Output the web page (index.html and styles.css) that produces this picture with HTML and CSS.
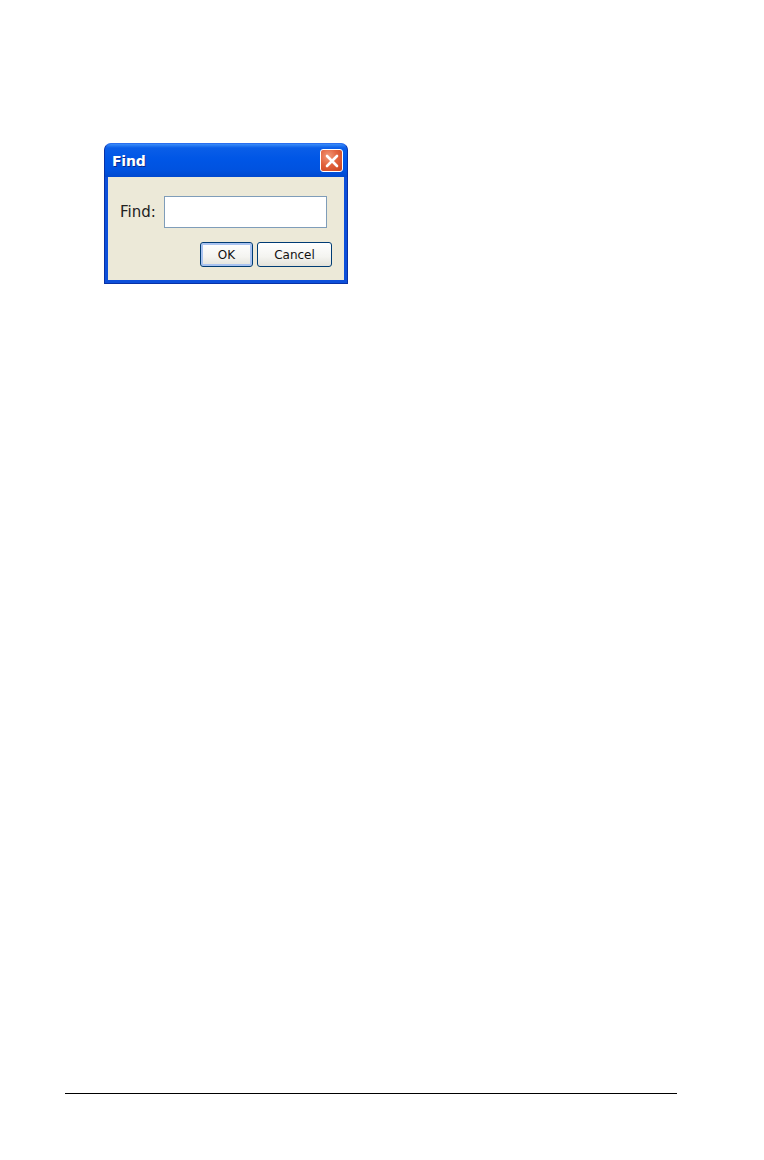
FILE: index.html
```html
<!DOCTYPE html>
<html>
<head>
<meta charset="utf-8">
<link rel="stylesheet" href="styles.css">
</head>
<body>
<div class="page">
  <div class="dialog">
    <div class="titlebar">
      <span class="title">Find</span>
      <div class="close">
        <svg width="14" height="14" viewBox="0 0 14 14"><path d="M2 2 L12 12 M12 2 L2 12" stroke="#fff" stroke-width="2.6" stroke-linecap="round"/></svg>
      </div>
    </div>
    <div class="body">
      <div class="row">
        <label class="label">Find:</label>
        <div class="input"></div>
      </div>
      <div class="buttons">
        <div class="btn ok">OK</div>
        <div class="btn cancel">Cancel</div>
      </div>
    </div>
  </div>
  <div class="rule"></div>
</div>
</body>
</html>
```
FILE: styles.css
```css
html, body {
  margin: 0;
  padding: 0;
  background: #fff;
}
.page {
  width: 764px;
  height: 1160px;
  padding-top: 143px;
  box-sizing: border-box;
  font-family: "DejaVu Sans", Tahoma, sans-serif;
}
.dialog {
  margin-left: 104px;
  width: 244px;
  height: 141px;
  box-sizing: border-box;
  background: #0d4fd9;
  border-radius: 7px 7px 0 0;
  padding: 0 3px 3px 3px;
  display: flex;
  flex-direction: column;
  border: 1px solid #0831a6;
  border-top-color: #2a6ff0;
}
.titlebar {
  height: 33px;
  margin: 0 -3px;
  padding: 0 4px 0 7px;
  border-radius: 6px 6px 0 0;
  background: linear-gradient(#3a8cf9 0%, #0a5ee8 12%, #0056e6 45%, #0052df 80%, #0049cf 100%);
  display: flex;
  align-items: center;
  justify-content: space-between;
}
.title {
  color: #fff;
  font-weight: bold;
  font-size: 14px;
  font-family: "DejaVu Sans", Tahoma, sans-serif;
  text-shadow: 1px 1px 0 #0a2a8a;
  letter-spacing: -0.2px;
}
.close {
  width: 23px;
  height: 23px;
  box-sizing: border-box;
  border: 1px solid #fff;
  border-radius: 3px;
  background: radial-gradient(circle at 35% 30%, #f29a7a 0%, #e2643f 45%, #c9411c 100%);
  display: flex;
  align-items: center;
  justify-content: center;
}
.body {
  flex: 1;
  background: #ece9d8;
  padding: 19px 12px 0 12px;
}
.row {
  display: flex;
  align-items: center;
}
.label {
  font-size: 15px;
  color: #222;
  width: 44px;
}
.input {
  width: 163px;
  height: 32px;
  box-sizing: border-box;
  background: #fff;
  border: 1px solid #7f9db9;
}
.buttons {
  display: flex;
  justify-content: flex-end;
  gap: 4px;
  margin-top: 14px;
}
.btn {
  height: 25px;
  box-sizing: border-box;
  border: 1px solid #003c74;
  border-radius: 3px;
  background: linear-gradient(#ffffff 0%, #f4f4f0 60%, #e3e2da 100%);
  font-size: 12px;
  color: #111;
  display: flex;
  align-items: center;
  justify-content: center;
}
.ok {
  width: 53px;
  box-shadow: inset 0 0 0 2px #a9c3f0;
}
.cancel {
  width: 75px;
}
.rule {
  margin-top: 809px;
  margin-left: 65px;
  width: 612px;
  height: 1px;
  background: #000;
}
```
